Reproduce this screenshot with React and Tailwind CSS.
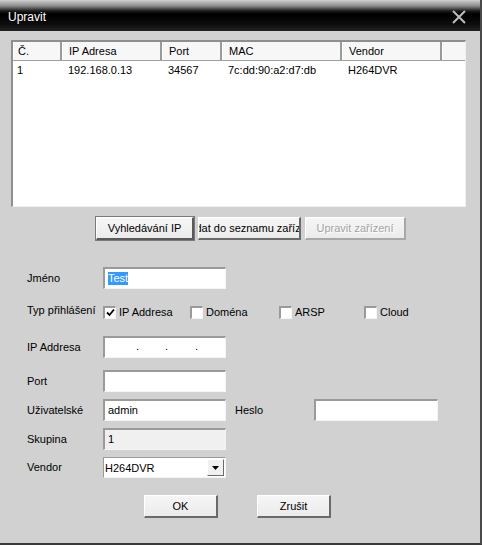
import React from "react";

const font = { fontFamily: '"Liberation Sans", Tahoma, Arial, sans-serif' };

function Input({ children, className = "", bg = "bg-white" }) {
  return (
    <div
      className={`h-[22px] w-[123px] ${bg} border-t-2 border-l-2 border-b border-r border-t-[#9a9a9a] border-l-[#9a9a9a] border-b-[#f4f4f4] border-r-[#f4f4f4] flex items-center pl-[3px] text-[11px] text-black ${className}`}
    >
      {children}
    </div>
  );
}

function Check({ checked }) {
  return (
    <div className="w-[13px] h-[13px] bg-white border-t-2 border-l-2 border-t-[#9a9a9a] border-l-[#9a9a9a] border-b border-r border-b-[#f4f4f4] border-r-[#f4f4f4] flex items-center justify-center">
      {checked && (
        <svg width="9" height="9" viewBox="0 0 9 9">
          <path d="M1 4.5 L3.5 7 L8 1.5" stroke="#000" strokeWidth="1.8" fill="none" />
        </svg>
      )}
    </div>
  );
}

function Btn({ children, className = "", disabled = false, def = false }) {
  return (
    <div
      className={`h-[23px] flex items-center justify-center overflow-hidden whitespace-nowrap text-[11px] bg-[linear-gradient(to_bottom,#f6f6f6,#ebebeb)] border-t border-l border-t-white border-l-white border-b-2 border-r-2 ${
        disabled ? "border-b-[#a8a8a8] border-r-[#a8a8a8] text-[#a3a3a3]" : def ? "border-b-[#5a5a5a] border-r-[#5a5a5a] text-black outline outline-1 outline-[#7a7a7a]" : "border-b-[#6a6a6a] border-r-[#6a6a6a] text-black"
      } ${className}`}
    >
      {children}
    </div>
  );
}

function Row({ label, children, className = "" }) {
  return (
    <div className={`flex items-center ${className}`}>
      <div className="w-[76px] text-[11px] text-black">{label}</div>
      {children}
    </div>
  );
}

export default function App() {
  const cols = [
    { t: "Č.", w: "w-[49px]", v: "1", p: "pl-[4px]" },
    { t: "IP Adresa", w: "w-[100px]", v: "192.168.0.13", p: "pl-[6px]" },
    { t: "Port", w: "w-[60px]", v: "34567", p: "pl-[6px]" },
    { t: "MAC", w: "w-[120px]", v: "7c:dd:90:a2:d7:db", p: "pl-[6px]" },
    { t: "Vendor", w: "w-[100px]", v: "H264DVR", p: "pl-[6px]" },
  ];
  return (
    <div style={font} className="w-[482px] h-[545px] bg-[#d1d1d1] flex flex-col border-r-2 border-r-[#4a4a4a] border-b-2 border-b-[#3a3a3a] overflow-hidden">
      {/* Title bar */}
      <div className="h-[31px] shrink-0 flex items-center justify-between bg-[linear-gradient(to_bottom,#d0d0d0_0px,#8a8a8a_6px,#1a1a1a_11px,#000_14px,#0c0c0c_24px,#222_31px)]">
        <span className="text-white text-[12px] pl-[8px] pt-[2px]">Upravit</span>
        <svg width="14" height="14" viewBox="0 0 14 14" className="mr-[14px] mt-[2px]">
          <path d="M1 1 L13 13 M13 1 L1 13" stroke="#bdbdbd" strokeWidth="2" />
        </svg>
      </div>

      {/* List */}
      <div className="ml-[11px] mt-[9px] w-[455px] h-[167px] shrink-0 bg-white border-t-2 border-l-2 border-t-[#8e8e8e] border-l-[#8e8e8e] border-b border-r border-b-[#f0f0f0] border-r-[#f0f0f0] text-[11px] text-black flex flex-col">
        <div className="h-[19px] flex border-b border-b-[#a0a0a0] bg-[#f7f7f7]">
          {cols.map((c) => (
            <div key={c.t} className={`${c.w} ${c.p} flex items-center border-r-2 border-r-[#9a9a9a] border-l border-l-white`}>
              {c.t}
            </div>
          ))}
          <div className="flex-1 border-l border-l-white" />
        </div>
        <div className="h-[18px] flex items-center">
          {cols.map((c) => (
            <div key={c.t} className={`${c.w} ${c.p} pt-[1px]`}>{c.v}</div>
          ))}
        </div>
      </div>

      {/* Buttons */}
      <div className="flex ml-[96px] mt-[10px] gap-[4px]">
        <Btn className="w-[98px]" def>Vyhledávání IP</Btn>
        <Btn className="w-[103px]">Přidat do seznamu zařízení</Btn>
        <Btn className="w-[101px]" disabled>
          <span className="[text-shadow:1px_1px_0_#ffffff]">Upravit zařízení</span>
        </Btn>
      </div>

      {/* Form */}
      <div className="ml-[27px] flex flex-col">
        <Row label="Jméno" className="mt-[27px]">
          <Input>
            <span className="bg-[#3399ff] text-white leading-[13px]">Test</span>
          </Input>
        </Row>
        <div className="flex items-center h-[22px] mt-[12px] text-[11px] text-black">
          <div className="w-[76px] -mt-[4px]">Typ přihlášení</div>
          <Check checked />
          <span className="ml-[3px] w-[71px]">IP Addresa</span>
          <Check />
          <span className="ml-[3px] w-[73px]">Doména</span>
          <Check />
          <span className="ml-[3px] w-[69px]">ARSP</span>
          <Check />
          <span className="ml-[3px]">Cloud</span>
        </div>
        <Row label="IP Addresa" className="mt-[13px]">
          <Input className="relative">
            <span className="absolute left-[31px] top-[3px] text-[11px] leading-none">.</span>
            <span className="absolute left-[60px] top-[3px] text-[11px] leading-none">.</span>
            <span className="absolute left-[90px] top-[3px] text-[11px] leading-none">.</span>
          </Input>
        </Row>
        <Row label="Port" className="mt-[12px]">
          <Input />
        </Row>
        <Row label="Uživatelské" className="mt-[7px]">
          <Input>admin</Input>
          <div className="w-[79px] ml-[9px] text-[11px] text-black">Heslo</div>
          <Input className="w-[124px]" />
        </Row>
        <Row label="Skupina" className="mt-[7px]">
          <Input bg="bg-[#f0f0f0]">1</Input>
        </Row>
        <Row label="Vendor" className="mt-[7px]">
          <div className="h-[21px] w-[123px] bg-white border-t border-l border-t-[#9a9a9a] border-l-[#9a9a9a] border-b border-r border-b-[#f4f4f4] border-r-[#f4f4f4] flex items-center justify-between text-[11px] text-black">
            <span className="pl-[1px] pt-[2px]">H264DVR</span>
            <div className="w-[17px] h-[17px] mr-[1px] bg-[#f0f0f0] border-t border-l border-t-white border-l-white border-b border-r border-b-[#6a6a6a] border-r-[#6a6a6a] flex items-center justify-center">
              <svg width="7" height="4" viewBox="0 0 7 4">
                <path d="M0 0 L7 0 L3.5 4 Z" fill="#000" />
              </svg>
            </div>
          </div>
        </Row>
      </div>

      <div className="flex mt-[17px] ml-[144px] gap-[39px]">
        <Btn className="w-[74px] h-[22px]">OK</Btn>
        <Btn className="w-[74px] h-[22px]">Zrušit</Btn>
      </div>
    </div>
  );
}
